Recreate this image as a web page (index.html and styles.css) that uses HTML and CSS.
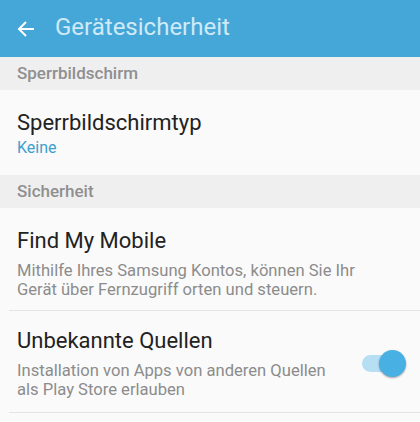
FILE: index.html
```html
<!DOCTYPE html>
<html lang="de">
<head>
    <meta charset="UTF-8">
    <meta name="viewport" content="width=device-width, initial-scale=1.0">
    <title>Gerätesicherheit</title>
    <link rel="stylesheet" href="styles.css">
</head>
<body>
    <div id="header">
        <svg class="back" width="18" height="18" viewBox="0 0 18 18">
            <path d="M17 9H2M9 2L2 9l7 7" fill="none" stroke="#fff" stroke-width="2"/>
        </svg>
        <span class="title">Gerätesicherheit</span>
    </div>

    <div class="section">Sperrbildschirm</div>
    <div class="row first">
        <div class="text">
            <div class="name">Sperrbildschirmtyp</div>
            <div class="value">Keine</div>
        </div>
    </div>

    <div class="section">Sicherheit</div>
    <div class="row first">
        <div class="text">
            <div class="name">Find My Mobile</div>
            <div class="desc">Mithilfe Ihres Samsung Kontos, können Sie Ihr<br>Gerät über Fernzugriff orten und steuern.</div>
        </div>
    </div>
    <div class="line"></div>
    <div class="row">
        <div class="text">
            <div class="name">Unbekannte Quellen</div>
            <div class="desc">Installation von Apps von anderen Quellen<br>als Play Store erlauben</div>
        </div>
        <div class="switch on"><span class="knob"></span></div>
    </div>
    <div class="line"></div>
</body>
</html>
```

FILE: styles.css
```css
*{
    margin: 0;
    padding: 0;
}
body{
    background: #fafafa;
    font-family: Roboto, "Noto Sans", sans-serif;
    width: 420px;
}
#header{
    height: 57px;
    background: #45a7d7;
    display: flex;
    align-items: center;
    padding-left: 17px;
}
#header .back{
    flex: none;
}
#header .title{
    margin-left: 20px;
    margin-top: -3px;
    color: #cfe9f7;
    font-size: 24px;
    line-height: 28px;
}
.section{
    height: 33px;
    line-height: 33px;
    background: #efefef;
    color: #8f8f8f;
    font-size: 17px;
    font-weight: 500;
    padding-left: 17px;
}
.row{
    display: flex;
    align-items: center;
    padding: 17px 14px 13px 17px;
}
.row.first{
    padding-top: 20px;
    padding-bottom: 11px;
}
.text{
    flex: 1;
}
.name{
    font-size: 22px;
    line-height: 25px;
    color: #222;
}
.value{
    margin-top: 3px;
    font-size: 16px;
    line-height: 19px;
    color: #3c9fd0;
    padding-bottom: 7px;
}
.desc{
    margin-top: 8px;
    font-size: 16.6px;
    line-height: 19px;
    color: #8c8c8c;
}
.line{
    height: 1px;
    background: #e4e4e4;
    margin-left: 9px;
}
/* 开关 */
.switch{
    position: relative;
    width: 44px;
    height: 27px;
    flex: none;
}
.switch:before{
    content: "";
    position: absolute;
    left: 0;
    top: 5px;
    width: 33px;
    height: 17px;
    border-radius: 9px;
    background: #b6dff3;
}
.switch .knob{
    position: absolute;
    right: 0;
    top: 0;
    width: 27px;
    height: 27px;
    border-radius: 50%;
    background: #48b0e2;
    box-shadow: 0 1px 2px rgba(0,0,0,0.35);
}
```
